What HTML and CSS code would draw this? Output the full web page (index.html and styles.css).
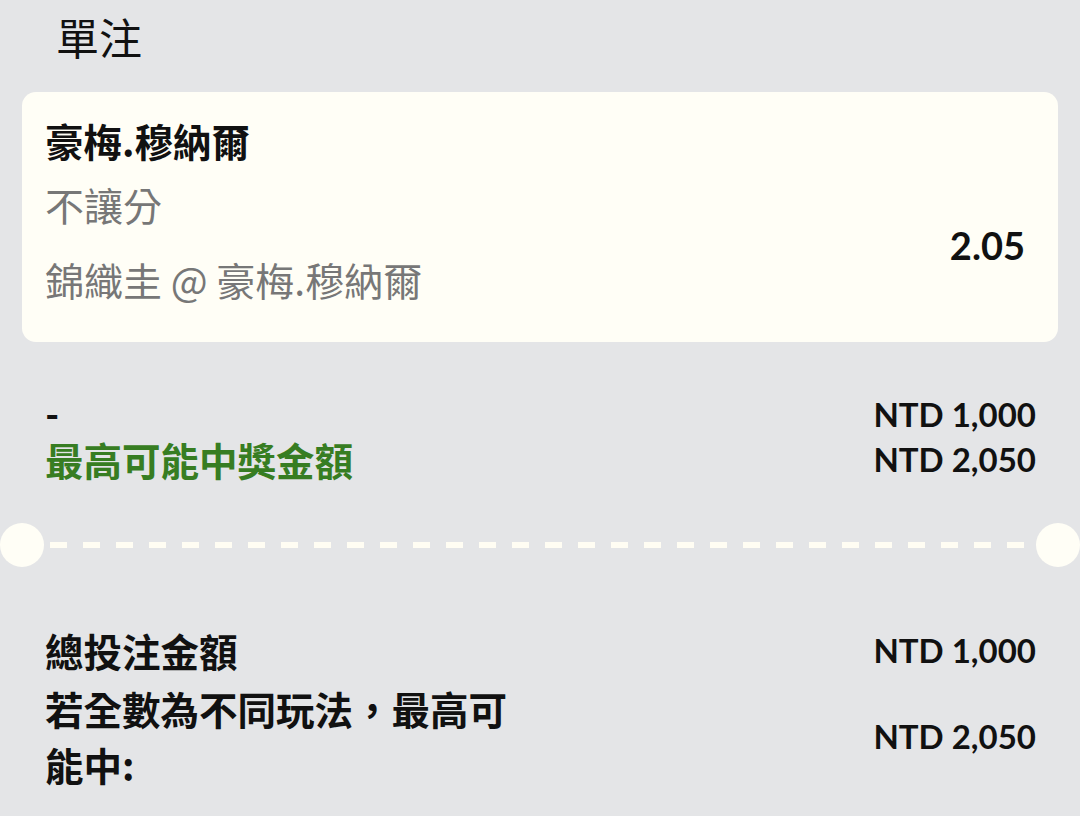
FILE: index.html
```html
<!DOCTYPE html>
<html lang="zh-Hant">
  <head>
    <meta charset="UTF-8" />
    <meta name="viewport" content="width=device-width, initial-scale=1.0" />
    <title>單注</title>
    <link rel="stylesheet" href="styles.css">
  </head>
  <body>
    <h1 class="title">單注</h1>

    <div class="card">
      <div class="pick">豪梅.穆納爾</div>
      <div class="market">不讓分</div>
      <div class="odds">2.05</div>
      <div class="match">錦織圭 @ 豪梅.穆納爾</div>
    </div>

    <div class="summary">
      <div class="label dash-label">-</div>
      <div class="amount">NTD 1,000</div>
      <div class="label win">最高可能中獎金額</div>
      <div class="amount">NTD 2,050</div>
    </div>

    <div class="divider">
      <span class="hole"></span>
      <span class="line"></span>
      <span class="hole"></span>
    </div>

    <div class="totals">
      <div class="row first">
        <div class="label">總投注金額</div>
        <div class="amount">NTD 1,000</div>
      </div>
      <div class="row">
        <div class="label wrap">若全數為不同玩法，最高可能中:</div>
        <div class="amount">NTD 2,050</div>
      </div>
    </div>
  </body>
</html>
```

FILE: styles.css
```css
body {
  margin: 0;
  background: #e4e5e7;
  color: #111111;
  font-family: "Noto Sans CJK TC", sans-serif;
}

.title {
  margin: 0;
  padding-left: 56px;
  font-size: 43px;
  font-weight: 400;
  line-height: 72px;
}

.card {
  margin: 20px 22px 0;
  height: 250px;
  box-sizing: border-box;
  padding: 16px 33px 0 23px;
  background: #fffef6;
  border-radius: 14px;
  display: grid;
  grid-template-columns: 1fr auto;
  grid-template-rows: 64px 64px 75px;
}

.pick {
  grid-column: 1 / 3;
  font-size: 38.5px;
  font-weight: 700;
  line-height: 64px;
}

.market,
.match {
  grid-column: 1;
  font-size: 39px;
  line-height: 64px;
  color: #777777;
}

.match {
  grid-row: 3;
  padding-top: 11px;
}

.odds {
  grid-column: 2;
  grid-row: 2 / 4;
  align-self: center;
  padding-top: 7px;
  font-family: Lato, sans-serif;
  font-size: 38px;
  font-weight: 700;
}

.summary {
  margin-top: 50px;
  padding: 0 44px 0 45px;
  display: grid;
  grid-template-columns: 1fr auto;
  grid-template-rows: 45px 49px;
  line-height: 45px;
}

.label {
  font-size: 38.5px;
  font-weight: 700;
}

.dash-label {
  font-family: Lato, sans-serif;
}

.win {
  font-family: Lato, "Noto Sans CJK TC", sans-serif;
  line-height: 49px;
  color: #377d22;
}

.amount {
  font-family: Lato, sans-serif;
  font-size: 33px;
  font-weight: 700;
  text-align: right;
}

.divider {
  margin-top: 37px;
  display: flex;
  align-items: center;
}

.hole {
  width: 44px;
  height: 44px;
  border-radius: 50%;
  background: #fffef6;
  flex: none;
}

.line {
  flex: 1;
  margin: 0 6px;
  height: 6px;
  background: repeating-linear-gradient(to right, #fffdf3 0 17px, transparent 17px 33px);
}

.totals {
  margin-top: 55px;
  padding: 0 44px 0 45px;
}

.row {
  display: flex;
  justify-content: space-between;
  align-items: center;
  line-height: 56px;
}

.row.first {
  margin-bottom: 2px;
}

.wrap {
  width: 470px;
}
```
